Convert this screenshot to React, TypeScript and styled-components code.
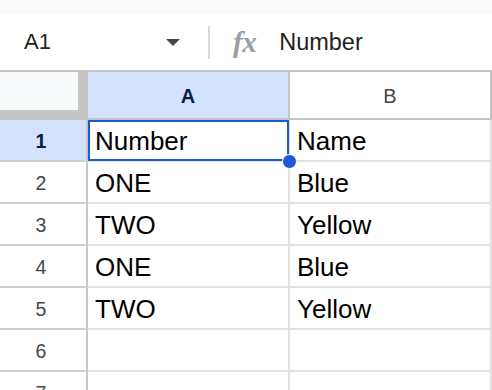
import React from 'react'
import styled, { createGlobalStyle } from 'styled-components'

const GlobalStyle = createGlobalStyle`
  html, body {
    margin: 0;
    padding: 0;
    background: #ffffff;
    overflow: hidden;
  }
  body {
    font-family: "Liberation Sans", Arial, sans-serif;
  }
`

const Page = styled.div`
  width: 492px;
  height: 390px;
  overflow: hidden;
`

const TopStrip = styled.div`
  height: 14px;
  background: #f9fbfd;
`

const FormulaBar = styled.div`
  display: flex;
  align-items: center;
  height: 56px;
  background: #ffffff;
`

const NameBox = styled.div`
  box-sizing: border-box;
  display: flex;
  align-items: center;
  justify-content: space-between;
  width: 208px;
  padding: 0 28px 0 24px;
  font-size: 22px;
  color: #1f1f1f;
`

const Caret = styled.span`
  width: 0;
  height: 0;
  border-left: 7px solid transparent;
  border-right: 7px solid transparent;
  border-top: 7px solid #444746;
`

const Divider = styled.div`
  width: 2px;
  height: 33px;
  background: #d9d9d9;
`

const FxLabel = styled.span`
  margin-left: 23px;
  font-family: "Liberation Serif", "Times New Roman", serif;
  font-style: italic;
  font-weight: 700;
  font-size: 29px;
  color: #9a9da1;
  letter-spacing: -0.5px;
`

const FormulaText = styled.span`
  margin-left: 23px;
  font-size: 23.5px;
  color: #1f1f1f;
`

const Sheet = styled.div`
  display: grid;
  grid-template-columns: 88px 202px 202px;
  grid-auto-rows: 42px;
  grid-template-rows: 50px;
`

const Corner = styled.div`
  box-sizing: border-box;
  border-top: 2px solid #c4c7c5;
  background: #c4c7c5;
  display: flex;
`

const CornerInner = styled.div`
  width: 78px;
  height: 38px;
  background: #f8f9fa;
`

const ColHeader = styled.div<{ $active?: boolean }>`
  box-sizing: border-box;
  display: flex;
  align-items: center;
  justify-content: center;
  border-top: 2px solid #c4c7c5;
  border-bottom: 2px solid #c4c7c5;
  border-right: 2px solid #c4c7c5;
  background: ${(p) => (p.$active ? '#d3e3fd' : '#ffffff')};
  color: ${(p) => (p.$active ? '#041e49' : '#444746')};
  font-weight: ${(p) => (p.$active ? 700 : 400)};
  font-size: 20px;
  padding-top: 2px;
`

const RowHeader = styled.div<{ $active?: boolean }>`
  box-sizing: border-box;
  display: flex;
  align-items: center;
  justify-content: center;
  padding: 2px 4px 0 0;
  border-right: 2px solid #c4c7c5;
  border-bottom: 2px solid #cfd1d0;
  background: ${(p) => (p.$active ? '#d3e3fd' : '#ffffff')};
  color: ${(p) => (p.$active ? '#041e49' : '#444746')};
  font-weight: ${(p) => (p.$active ? 700 : 400)};
  font-size: 19.5px;
`

const Cell = styled.div<{ $selected?: boolean }>`
  position: relative;
  box-sizing: border-box;
  display: flex;
  align-items: center;
  padding: 2px 7px 0;
  border-right: 2px solid #e1e1e1;
  border-bottom: 2px solid #e1e1e1;
  font-size: 26px;
  color: #000000;
  white-space: nowrap;

  ${(p) =>
    p.$selected &&
    `
    &::before {
      content: '';
      position: absolute;
      top: 0;
      left: 0;
      right: -1px;
      bottom: -1px;
      border: 2px solid #1f5ad6;
      z-index: 1;
    }
    &::after {
      content: '';
      position: absolute;
      right: -9px;
      bottom: -9px;
      width: 13px;
      height: 13px;
      border-radius: 50%;
      background: #2356d4;
      border: 1px solid #ffffff;
      z-index: 2;
    }
  `}
`

const rows: [string, string][] = [
  ['Number', 'Name'],
  ['ONE', 'Blue'],
  ['TWO', 'Yellow'],
  ['ONE', 'Blue'],
  ['TWO', 'Yellow'],
  ['', ''],
  ['', ''],
]

const App = () => {
  return (
    <Page>
      <GlobalStyle />
      <TopStrip />
      <FormulaBar>
        <NameBox>
          <span>A1</span>
          <Caret />
        </NameBox>
        <Divider />
        <FxLabel>fx</FxLabel>
        <FormulaText>Number</FormulaText>
      </FormulaBar>
      <Sheet>
        <Corner>
          <CornerInner />
        </Corner>
        <ColHeader $active>A</ColHeader>
        <ColHeader>B</ColHeader>
        {rows.map((row, i) => (
          <React.Fragment key={i}>
            <RowHeader $active={i === 0}>{i + 1}</RowHeader>
            <Cell $selected={i === 0}>{row[0]}</Cell>
            <Cell>{row[1]}</Cell>
          </React.Fragment>
        ))}
      </Sheet>
    </Page>
  )
}

export default App
